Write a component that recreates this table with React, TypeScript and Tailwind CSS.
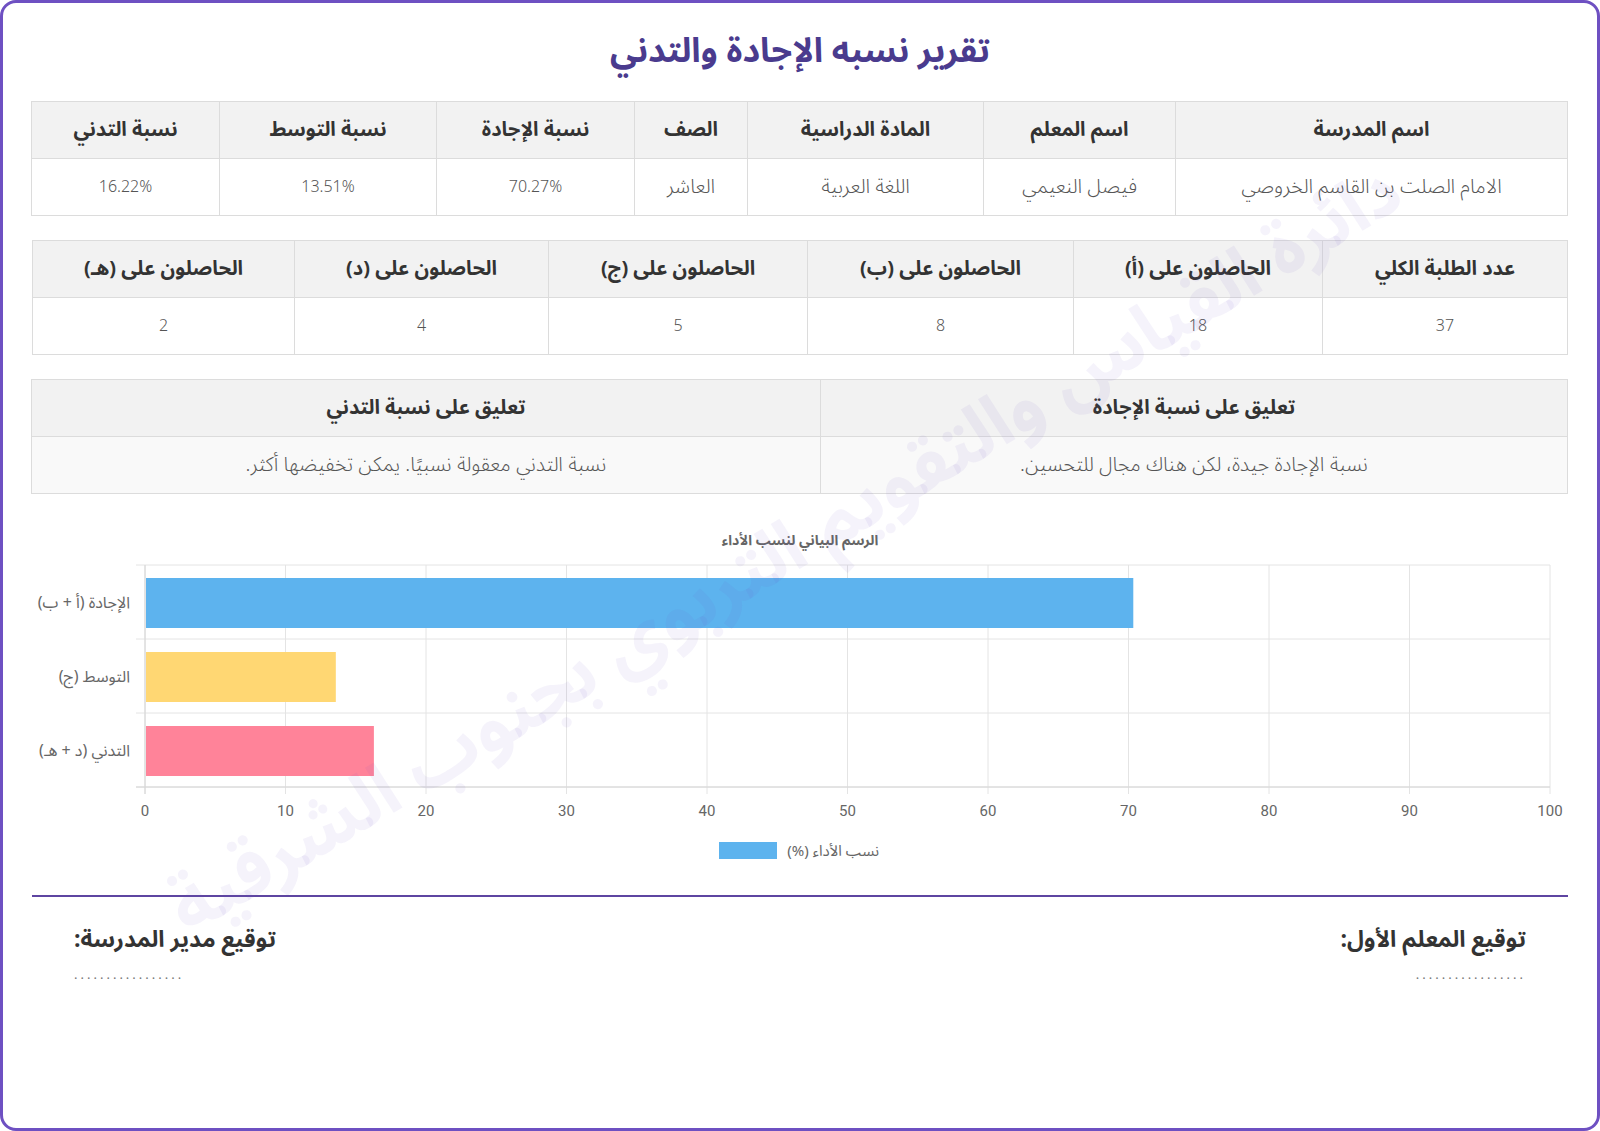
import React from 'react';

const AR = '"Noto Sans Arabic", "Noto Kufi Arabic", "DejaVu Sans", sans-serif';

const info = {
    headers: ['اسم المدرسة', 'اسم المعلم', 'المادة الدراسية', 'الصف', 'نسبة الإجادة', 'نسبة التوسط', 'نسبة التدني'],
    values: ['الامام الصلت بن القاسم الخروصي', 'فيصل النعيمي', 'اللغة العربية', 'العاشر', '70.27%', '13.51%', '16.22%'],
    widths: [392, 192, 236, 113, 198, 217, 188],
};

const counts = {
    headers: ['عدد الطلبة الكلي', 'الحاصلون على (أ)', 'الحاصلون على (ب)', 'الحاصلون على (ج)', 'الحاصلون على (د)', 'الحاصلون على (هـ)'],
    values: ['37', '18', '8', '5', '4', '2'],
    widths: [245, 249, 266, 259, 254, 262],
};

const comments = {
    headers: ['تعليق على نسبة الإجادة', 'تعليق على نسبة التدني'],
    values: ['نسبة الإجادة جيدة، لكن هناك مجال للتحسين.', 'نسبة التدني معقولة نسبيًا. يمكن تخفيضها أكثر.'],
    widths: [747, 789],
};

const bars = [
    { label: 'الإجادة (أ + ب)', value: 70.27, color: '#5db3ee' },
    { label: 'التوسط (ج)', value: 13.51, color: '#ffd773' },
    { label: 'التدني (د + هـ)', value: 16.22, color: '#ff8399' },
];

type TableData = { headers: string[]; values: string[]; widths: number[] };

const isNumber = (v: string) => /^[\d.%]+$/.test(v);

const ReportTable: React.FC<{ data: TableData; shaded?: boolean; className?: string }> = ({ data, shaded, className }) => (
    <table className={`w-full table-fixed border-collapse ${className ?? ''}`}>
        <colgroup>
            {data.widths.map((w, i) => (
                <col key={i} style={{ width: w }} />
            ))}
        </colgroup>
        <thead>
            <tr className="h-[57px] bg-[#f2f2f2]">
                {data.headers.map((h) => (
                    <th key={h} className="border border-[#dcdcdc] text-[20px] font-bold text-[#333]">
                        {h}
                    </th>
                ))}
            </tr>
        </thead>
        <tbody>
            <tr className={`h-[57px] ${shaded ? 'bg-[#f9f9f9]' : 'bg-white'}`}>
                {data.values.map((v, i) => (
                    <td
                        key={i}
                        className={`border border-[#dcdcdc] text-center font-light text-[#555] ${isNumber(v) ? 'text-[16px]' : 'text-[20px]'}`}
                    >
                        {v}
                    </td>
                ))}
            </tr>
        </tbody>
    </table>
);

const Chart: React.FC = () => {
    const L = 113;
    const W = 1405;
    const T = 51;
    const band = 74;
    const B = T + band * 3;
    const ticks = [0, 10, 20, 30, 40, 50, 60, 70, 80, 90, 100];

    return (
        <svg width="1536" height="381" viewBox="0 0 1536 381" className="block">
            <text x="768" y="31" textAnchor="middle" direction="rtl" fontSize="14" fontWeight="bold" fill="#666" fontFamily={AR}>
                الرسم البياني لنسب الأداء
            </text>

            {ticks.map((t, i) => (
                <line key={t} x1={L + i * 140.5} x2={L + i * 140.5} y1={T} y2={B + 7} stroke="#e4e4e4" strokeWidth="1" />
            ))}
            {[0, 1, 2, 3].map((i) => (
                <line key={i} x1={L - 9} x2={L + W} y1={T + i * band} y2={T + i * band} stroke="#e4e4e4" strokeWidth="1" />
            ))}
            <line x1={L} x2={L} y1={T} y2={B + 7} stroke="#d6d6d6" strokeWidth="1" />
            <line x1={L - 9} x2={L + W} y1={B} y2={B} stroke="#d6d6d6" strokeWidth="1" />

            {bars.map((b, i) => (
                <g key={b.label}>
                    <rect x={L + 1} y={T + i * band + 13} width={(b.value / 100) * W} height={50} fill={b.color} />
                    <text
                        x="98"
                        y={T + i * band + 43}
                        textAnchor="start"
                        direction="rtl"
                        fontSize="16"
                        fill="#666"
                        fontFamily={AR}
                    >
                        {b.label}
                    </text>
                </g>
            ))}

            {ticks.map((t, i) => (
                <text key={t} x={L + i * 140.5} y={302} textAnchor="middle" fontSize="15" fill="#666" fontFamily="Roboto, sans-serif">
                    {t}
                </text>
            ))}

            <rect x="687" y="328" width="58" height="17" fill="#5db3ee" />
            <text x="847" y="342" textAnchor="start" direction="rtl" fontSize="15" fill="#666" fontFamily={AR}>
                نسب الأداء (%)
            </text>
        </svg>
    );
};

const App: React.FC = () => {
    return (
        <div dir="rtl" className="relative min-h-screen overflow-hidden rounded-2xl border-[3px] border-[#6e50c2] bg-white px-[29px]" style={{ fontFamily: AR }}>
            <h1 className="mt-[22px] flex h-[52px] items-center justify-center text-[34px] font-bold text-[#4a3b8e]">
                تقرير نسبه الإجادة والتدني
            </h1>

            <ReportTable data={info} className="mt-[24px]" />
            <ReportTable data={counts} className="mt-[24px]" />
            <ReportTable data={comments} shaded className="mt-[24px]" />

            <div className="mt-[20px]">
                <Chart />
            </div>

            <div className="h-[2px] bg-[#5e45a1]" />

            <div className="flex justify-between px-[42px] pt-[26px]">
                <div className="text-right">
                    <p className="text-[23px] font-bold leading-[34px] text-[#333]">توقيع المعلم الأول:</p>
                    <p className="mt-[10px] text-[13px] leading-[16px] tracking-[3px] text-[#777]">.................</p>
                </div>
                <div className="text-left">
                    <p className="text-[23px] font-bold leading-[34px] text-[#333]">توقيع مدير المدرسة:</p>
                    <p className="mt-[10px] text-[13px] leading-[16px] tracking-[3px] text-[#777]">.................</p>
                </div>
            </div>

            {/* watermark */}
            <div className="pointer-events-none absolute left-[783px] top-[548px] -translate-x-1/2 -translate-y-1/2 -rotate-[31deg] whitespace-nowrap text-[73px] font-bold text-[#6e50c2]/[0.07]">
                دائرة القياس والتقويم التربوي بجنوب الشرقية
            </div>
        </div>
    );
};

export default App;
